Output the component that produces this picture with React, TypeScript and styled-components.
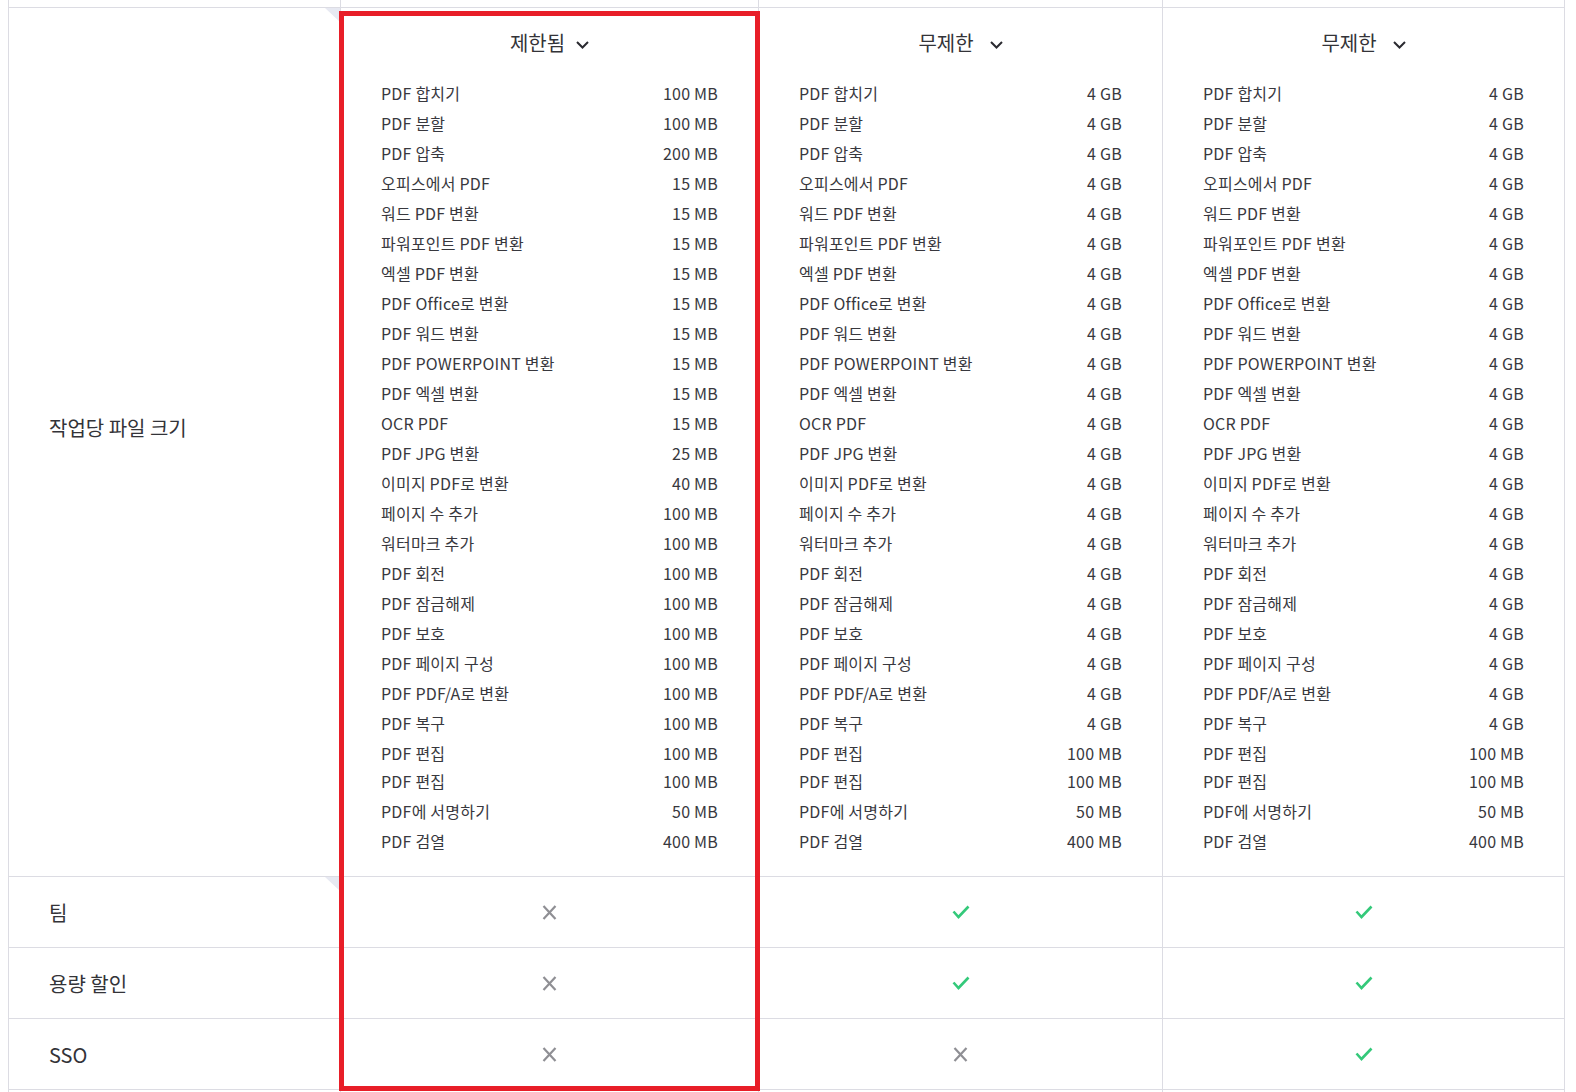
import React from "react";
import styled, { createGlobalStyle } from "styled-components";

const GlobalStyle = createGlobalStyle`
  html, body { margin: 0; padding: 0; background: #ffffff; }
  body {
    font-family: "Noto Sans CJK KR", "Noto Sans", "Liberation Sans", sans-serif;
    color: #333338;
  }
`;

const BORDER = "#dcdce3";

const Page = styled.div`
  position: relative;
  width: 1576px;
  height: 1092px;
  overflow: hidden;
  padding-left: 8px;
  box-sizing: border-box;
`;

const Table = styled.div`
  display: grid;
  grid-template-columns: 332px 418px 404px 402px;
  width: 1557px;
  border-left: 1px solid ${BORDER};
  box-sizing: border-box;
`;

const Cell = styled.div<{ $h?: number }>`
  position: relative;
  box-sizing: content-box;
  border-right: 1px solid ${BORDER};
  border-bottom: 1px solid ${BORDER};
  ${(p) => (p.$h !== undefined ? `height: ${p.$h}px;` : "")}
`;

const StubCell = styled(Cell)`
  border-bottom: ${(p) => (p.$h === 7 ? `1px solid ${BORDER}` : "none")};
`;

const LabelCell = styled(Cell)`
  display: flex;
  align-items: center;
  padding-left: 40px;
  font-size: 20px;
  color: #333338;
`;

const SizeLabelCell = styled(LabelCell)`
  padding-bottom: 30px;
`;

const Fold = styled.span`
  position: absolute;
  top: 0;
  right: 0;
  width: 15px;
  height: 14px;
  background: #e7e9f2;
  clip-path: polygon(0 0, 100% 0, 100% 100%);
`;

const PlanCell = styled(Cell)`
  display: flex;
  flex-direction: column;
  padding: 19px 0 20px;
`;

const PlanHeader = styled.div<{ $gap: number }>`
  display: flex;
  align-items: center;
  justify-content: center;
  gap: ${(p) => p.$gap}px;
  height: 30px;
  font-size: 20px;
  color: #333338;
  margin-bottom: 21px;
`;

const Chevron = styled.svg`
  width: 13px;
  height: 8px;
  margin-top: 5px;
`;

const ItemList = styled.div`
  display: flex;
  flex-direction: column;
`;

const ItemRow = styled.div<{ $seam?: boolean }>`
  display: flex;
  align-items: center;
  justify-content: space-between;
  height: 30px;
  padding: 0 40px;
  font-size: 16px;
  letter-spacing: 0.22px;
  color: #38383e;
  ${(p) => (p.$seam ? "margin-top: -2px;" : "")}
`;

const IconCell = styled(Cell)`
  display: flex;
  align-items: center;
  justify-content: center;
`;

const Overlay = styled.div`
  position: absolute;
  left: 339px;
  top: 11px;
  width: 421px;
  height: 1080px;
  box-sizing: border-box;
  border: 5px solid #e81e28;
  pointer-events: none;
`;

const XIcon = () => (
  <svg width="15" height="15" viewBox="0 0 15 15">
    <path d="M1.5 1 L13.5 14 M13.5 1 L1.5 14" stroke="#8f8f94" strokeWidth="2.2" fill="none" />
  </svg>
);

const CheckIcon = () => (
  <svg width="18" height="14" viewBox="0 0 18 14">
    <path d="M1.5 6.5 L6.5 12 L16.5 1.5" stroke="#34c97a" strokeWidth="2.6" fill="none" strokeLinejoin="miter" />
  </svg>
);

const ChevronIcon = () => (
  <Chevron viewBox="0 0 13 8">
    <path d="M1 1 L6.5 6.5 L12 1" stroke="#2a2a30" strokeWidth="2" fill="none" />
  </Chevron>
);

const items: [string, string, string, string][] = [
  ["PDF 합치기", "100 MB", "4 GB", "4 GB"],
  ["PDF 분할", "100 MB", "4 GB", "4 GB"],
  ["PDF 압축", "200 MB", "4 GB", "4 GB"],
  ["오피스에서 PDF", "15 MB", "4 GB", "4 GB"],
  ["워드 PDF 변환", "15 MB", "4 GB", "4 GB"],
  ["파워포인트 PDF 변환", "15 MB", "4 GB", "4 GB"],
  ["엑셀 PDF 변환", "15 MB", "4 GB", "4 GB"],
  ["PDF Office로 변환", "15 MB", "4 GB", "4 GB"],
  ["PDF 워드 변환", "15 MB", "4 GB", "4 GB"],
  ["PDF POWERPOINT 변환", "15 MB", "4 GB", "4 GB"],
  ["PDF 엑셀 변환", "15 MB", "4 GB", "4 GB"],
  ["OCR PDF", "15 MB", "4 GB", "4 GB"],
  ["PDF JPG 변환", "25 MB", "4 GB", "4 GB"],
  ["이미지 PDF로 변환", "40 MB", "4 GB", "4 GB"],
  ["페이지 수 추가", "100 MB", "4 GB", "4 GB"],
  ["워터마크 추가", "100 MB", "4 GB", "4 GB"],
  ["PDF 회전", "100 MB", "4 GB", "4 GB"],
  ["PDF 잠금해제", "100 MB", "4 GB", "4 GB"],
  ["PDF 보호", "100 MB", "4 GB", "4 GB"],
  ["PDF 페이지 구성", "100 MB", "4 GB", "4 GB"],
  ["PDF PDF/A로 변환", "100 MB", "4 GB", "4 GB"],
  ["PDF 복구", "100 MB", "4 GB", "4 GB"],
  ["PDF 편집", "100 MB", "100 MB", "100 MB"],
  ["PDF 편집", "100 MB", "100 MB", "100 MB"],
  ["PDF에 서명하기", "50 MB", "50 MB", "50 MB"],
  ["PDF 검열", "400 MB", "400 MB", "400 MB"],
];

const plans: { name: string; gap: number }[] = [
  { name: "제한됨", gap: 11 },
  { name: "무제한", gap: 16 },
  { name: "무제한", gap: 16 },
];

const features: { label: string; values: boolean[]; fold?: boolean }[] = [
  { label: "팀", values: [false, true, true], fold: true },
  { label: "용량 할인", values: [false, true, true] },
  { label: "SSO", values: [false, false, true] },
];

export default function App() {
  return (
    <>
      <GlobalStyle />
      <Page>
        <Table>
          {[0, 1, 2, 3].map((i) => (
            <StubCell key={`top-${i}`} $h={7} />
          ))}

          <SizeLabelCell>
            <Fold />
            작업당 파일 크기
          </SizeLabelCell>
          {plans.map((plan, pi) => (
            <PlanCell key={`plan-${pi}`}>
              <PlanHeader $gap={plan.gap}>
                {plan.name}
                <ChevronIcon />
              </PlanHeader>
              <ItemList>
                {items.map((it, ii) => (
                  <ItemRow key={ii} $seam={ii === 23}>
                    <span>{it[0]}</span>
                    <span>{it[pi + 1]}</span>
                  </ItemRow>
                ))}
              </ItemList>
            </PlanCell>
          ))}

          {features.map((f) => (
            <React.Fragment key={f.label}>
              <LabelCell $h={70}>
                {f.fold && <Fold />}
                {f.label}
              </LabelCell>
              {f.values.map((v, vi) => (
                <IconCell key={vi} $h={70}>
                  {v ? <CheckIcon /> : <XIcon />}
                </IconCell>
              ))}
            </React.Fragment>
          ))}

          {[0, 1, 2, 3].map((i) => (
            <StubCell key={`bot-${i}`} $h={10} />
          ))}
        </Table>
        <Overlay />
      </Page>
    </>
  );
}
